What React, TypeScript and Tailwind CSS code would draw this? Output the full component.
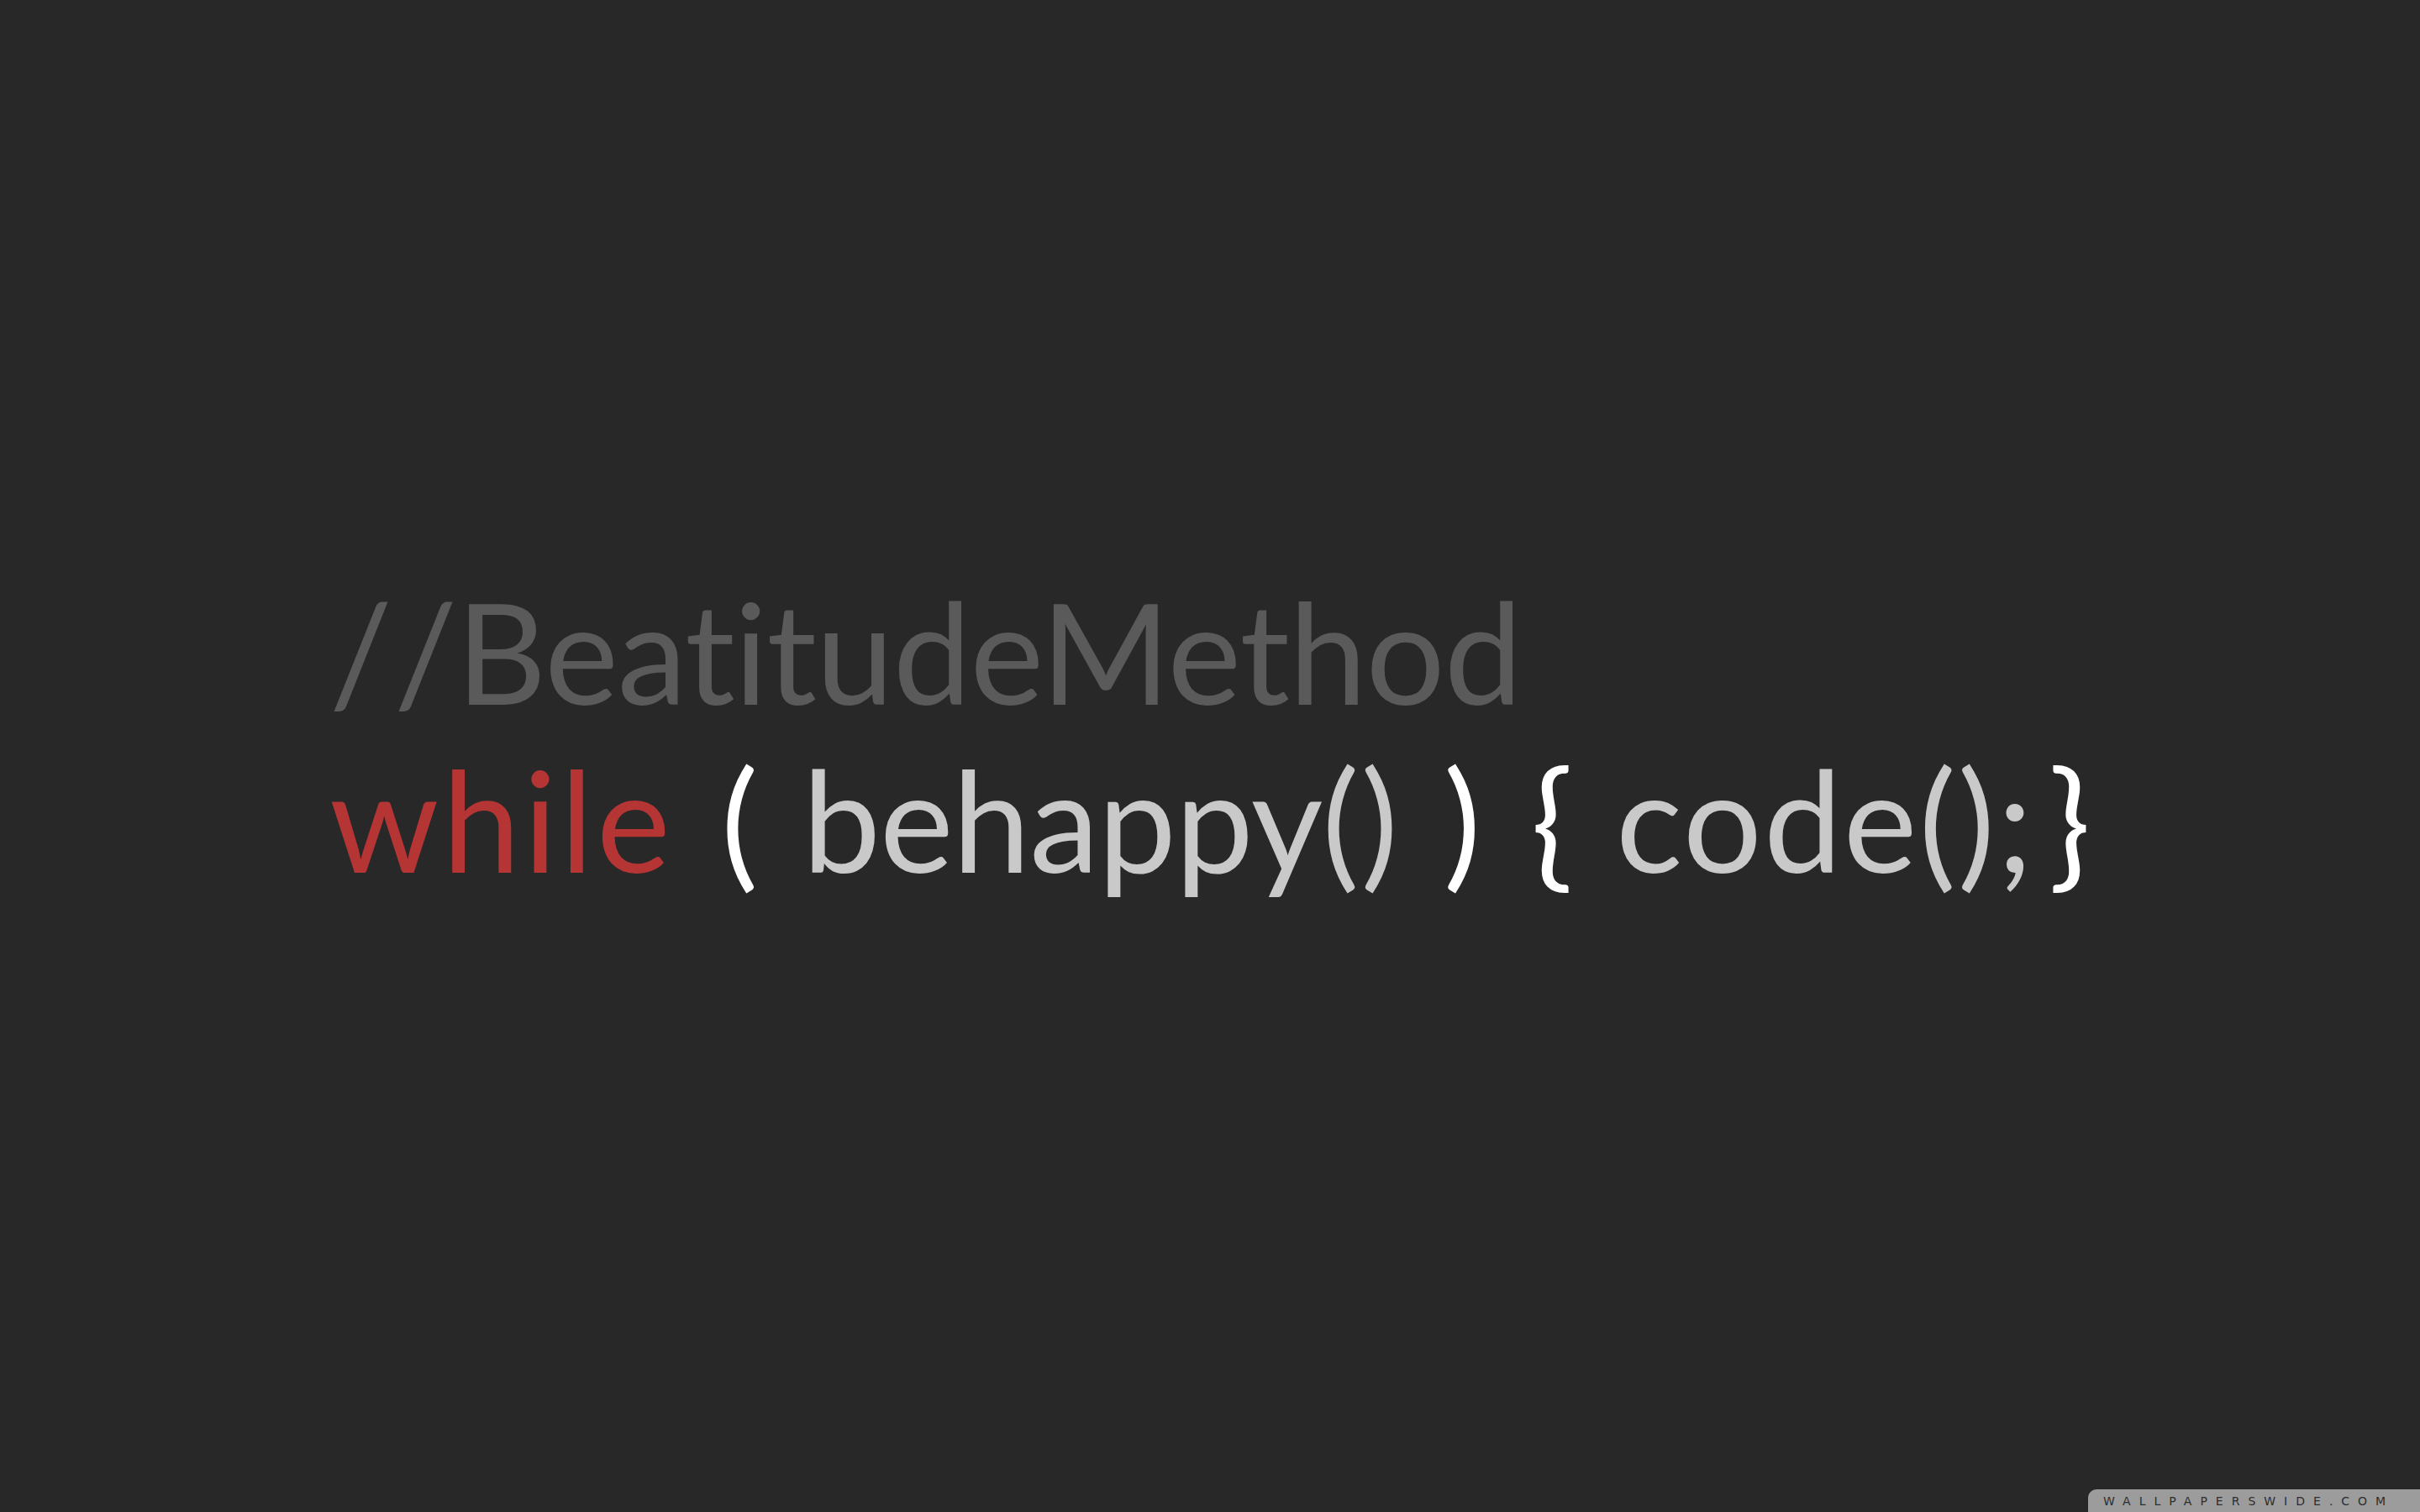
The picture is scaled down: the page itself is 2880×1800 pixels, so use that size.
export default function App() {
  const font = { fontFamily: 'Lato, "Noto Sans", sans-serif' };

  return (
    <div className="relative flex h-[1800px] w-[2880px] flex-col overflow-hidden bg-[#282828]" style={font}>
      <div className="flex flex-col pl-[392px] pt-[675px] [font-variant-ligatures:none]">
        <p className="whitespace-pre text-[166px] leading-[200px] tracking-[-1px] text-[#5a5a5a]">
          <span className="mr-[3px]">/</span>/BeatitudeMethod
        </p>
        <div className="flex items-baseline whitespace-pre text-[166px] leading-[200px] text-[#c9c9c9]">
          <span className="w-[466px] tracking-[4px] text-[#b53434]">while</span>
          <span className="w-[97px] text-white">(</span>
          <span className="w-[763px]">
            <span className="tracking-[-1px]">behappy</span>
            <span className="tracking-[2px]">()</span>
          </span>
          <span className="w-[104px] text-white">)</span>
          <span className="w-[101px] text-white">{"{"}</span>
          <span className="w-[515px] tracking-[2px]">code();</span>
          <span className="text-white">{"}"}</span>
        </div>
      </div>

      <div className="absolute bottom-0 right-0 flex h-[27px] w-[395px] items-center rounded-tl-[10px] bg-[#9c9c9c] pl-[18px]">
        <span className="text-[14px] font-normal leading-none tracking-[10px] text-[#2e2e2e]" style={{ fontFamily: '"DejaVu Sans", sans-serif' }}>
          WALLPAPERSWIDE.COM
        </span>
      </div>
    </div>
  );
}
